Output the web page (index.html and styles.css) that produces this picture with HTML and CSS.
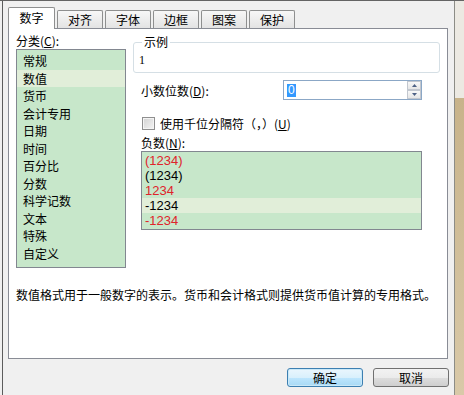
FILE: index.html
```html
<!DOCTYPE html>
<html>
<head>
	<meta charset="utf-8">
	<link rel="stylesheet" href="styles.css">
</head>
<body>
	<div class="screen">
		<div class="dialog">
			<div class="tabs">
				<div class="tab active">数字</div>
				<div class="tab">对齐</div>
				<div class="tab">字体</div>
				<div class="tab">边框</div>
				<div class="tab">图案</div>
				<div class="tab">保护</div>
			</div>
			<div class="panel">
				<div class="col-left">
					<div class="cat-label">分类(<u>C</u>):</div>
					<ul class="cat-list">
						<li>常规</li>
						<li class="sel">数值</li>
						<li>货币</li>
						<li>会计专用</li>
						<li>日期</li>
						<li>时间</li>
						<li>百分比</li>
						<li>分数</li>
						<li>科学记数</li>
						<li>文本</li>
						<li>特殊</li>
						<li>自定义</li>
					</ul>
				</div>
				<div class="col-right">
					<fieldset class="sample">
						<legend>示例</legend>
						<div class="sample-value">1</div>
					</fieldset>
					<div class="decimals">
						<label>小数位数(<u>D</u>):</label>
						<div class="spin">
							<span class="spin-value">0</span>
							<div class="spin-btns">
								<span class="spin-btn"><svg width="5" height="3" viewBox="0 0 5 3"><path d="M0 3 L2.5 0 L5 3 Z" fill="#4d6185"/></svg></span>
								<span class="spin-btn"><svg width="5" height="3" viewBox="0 0 5 3"><path d="M0 0 L2.5 3 L5 0 Z" fill="#4d6185"/></svg></span>
							</div>
						</div>
					</div>
					<div class="check-row">
						<span class="check"></span>
						<span>使用千位分隔符（，）(<u>U</u>)</span>
					</div>
					<div class="neg-label">负数(<u>N</u>):</div>
					<ul class="neg-list">
						<li class="red">(1234)</li>
						<li>(1234)</li>
						<li class="red">1234</li>
						<li class="sel">-1234</li>
						<li class="red">-1234</li>
					</ul>
				</div>
				<p class="desc">数值格式用于一般数字的表示。货币和会计格式则提供货币值计算的专用格式。</p>
			</div>
			<div class="buttons">
				<button class="btn default">确定</button>
				<button class="btn">取消</button>
			</div>
		</div>
		<div class="edge"></div>
	</div>
</body>
</html>
```

FILE: styles.css
```css
html, body {
	margin: 0;
	padding: 0;
}

body {
	width: 464px;
	height: 395px;
	overflow: hidden;
	background: #f0f0f0;
	font-family: "Noto Sans CJK SC", "Liberation Sans", sans-serif;
	font-size: 12px;
	color: #000;
}

.screen {
	display: flex;
	height: 395px;
	border-top: 1px solid #646464;
	box-sizing: border-box;
}

.dialog {
	width: 453px;
	margin-left: 2px;
	border-left: 1px solid #5c5c5c;
	padding: 6px 0 0 5px;
	box-sizing: border-box;
}

.edge {
	width: 9px;
	border-left: 1px solid #8c8c86;
	background: linear-gradient(to bottom, #ece9e2 0, #ece9e2 97px, #c8b38a 97px, #d9c9a8 100%);
}

/* tabs */

.tabs {
	display: flex;
	align-items: flex-end;
	height: 21px;
	position: relative;
	z-index: 1;
}

.tab {
	width: 46px;
	height: 18px;
	margin-right: 2px;
	box-sizing: border-box;
	border: 1px solid #8e8f8f;
	border-bottom: none;
	border-radius: 2px 2px 0 0;
	background: linear-gradient(to bottom, #f7f7f7, #e3e3e3);
	text-align: center;
	line-height: 17px;
}

.tab.active {
	width: 47px;
	height: 22px;
	margin-bottom: -1px;
	background: #fff;
	line-height: 20px;
}

.panel {
	width: 440px;
	height: 331px;
	box-sizing: border-box;
	border: 1px solid #898c95;
	background: #fff;
	display: grid;
	grid-template-columns: 110px 307px;
	column-gap: 7px;
	align-content: start;
	padding: 4px 0 0 7px;
}

/* category list */

.cat-label {
	line-height: 16px;
}

u {
	text-decoration: underline;
}

.cat-list {
	list-style: none;
	margin: 0;
	padding: 2px 0 0;
	height: 219px;
	box-sizing: border-box;
	border: 1px solid #828790;
	background: #c7e7ca;
}

.cat-list li {
	line-height: 17.5px;
	height: 17.5px;
	padding-left: 6px;
}

.cat-list li.sel {
	background: #e1eed9;
}

/* right side */

.sample {
	margin: 1px 0 0;
	padding: 0 5px 2px;
	border: 1px solid #d5dfe5;
	border-radius: 3px;
}

.sample legend {
	margin-left: 3px;
	padding: 0 2px;
	line-height: 16px;
}

.sample-value {
	line-height: 20px;
	font-family: "Liberation Serif", serif;
	font-size: 12px;
}

.decimals {
	display: flex;
	align-items: center;
	margin-top: 7px;
	padding: 0 18px 0 8px;
}

.decimals label {
	flex: 1;
}

.spin {
	width: 139px;
	height: 20px;
	box-sizing: border-box;
	border: 1px solid #8ba7c6;
	display: flex;
	align-items: center;
	justify-content: space-between;
	padding-left: 3px;
}

.spin-value {
	background: #3399ff;
	color: #fff;
	font-family: "Liberation Sans", sans-serif;
	font-size: 12px;
	line-height: 13px;
	padding: 0 1px;
}

.spin-btns {
	display: flex;
	flex-direction: column;
	width: 14px;
	height: 18px;
}

.spin-btn {
	flex: 1;
	box-sizing: border-box;
	border: 1px solid #c2c7cf;
	background: linear-gradient(to bottom, #f8f8f8, #e6e6e6);
	display: flex;
	align-items: center;
	justify-content: center;
}

.check-row {
	display: flex;
	align-items: center;
	margin-top: 16px;
	padding-left: 9px;
	height: 14px;
}

.check {
	width: 13px;
	height: 13px;
	box-sizing: border-box;
	border: 1px solid #8f8f8f;
	background: linear-gradient(135deg, #d2d2d2, #f4f4f4);
	box-shadow: inset 0 0 0 1px #f4f4f4;
	margin-right: 5px;
}

.neg-label {
	margin-top: 5px;
	padding-left: 8px;
	line-height: 15px;
}

.neg-list {
	list-style: none;
	margin: 1px 0 0 8px;
	padding: 1px 0 0;
	width: 281px;
	height: 79px;
	box-sizing: border-box;
	border: 1px solid #828790;
	background: #c7e7ca;
	font-family: "Liberation Sans", sans-serif;
	font-size: 13px;
}

.neg-list li {
	line-height: 15px;
	height: 15px;
	padding-left: 3px;
}

.neg-list li.sel {
	background: #e1eed9;
}

.neg-list li.red {
	color: #e0232a;
}

.desc {
	grid-column: 1 / -1;
	margin: 20px 0 0;
	line-height: 14px;
}

/* buttons */

.buttons {
	display: flex;
	justify-content: flex-end;
	gap: 10px;
	margin-top: 9px;
	width: 441px;
}

.btn {
	width: 76px;
	height: 19px;
	padding: 0;
	border: 1px solid #707070;
	border-radius: 3px;
	background: linear-gradient(to bottom, #f2f2f2 0%, #ebebeb 50%, #dddddd 51%, #cfcfcf 100%);
	font-family: "Noto Sans CJK SC", sans-serif;
	font-size: 12px;
	line-height: 16px;
	color: #000;
}

.btn.default {
	border-color: #3c7fb1;
	background: linear-gradient(to bottom, #eaf6fd 0%, #d9f0fc 50%, #bee6fd 51%, #a7d9f5 100%);
	box-shadow: inset 0 0 0 1px #c9e8f8;
}
```
